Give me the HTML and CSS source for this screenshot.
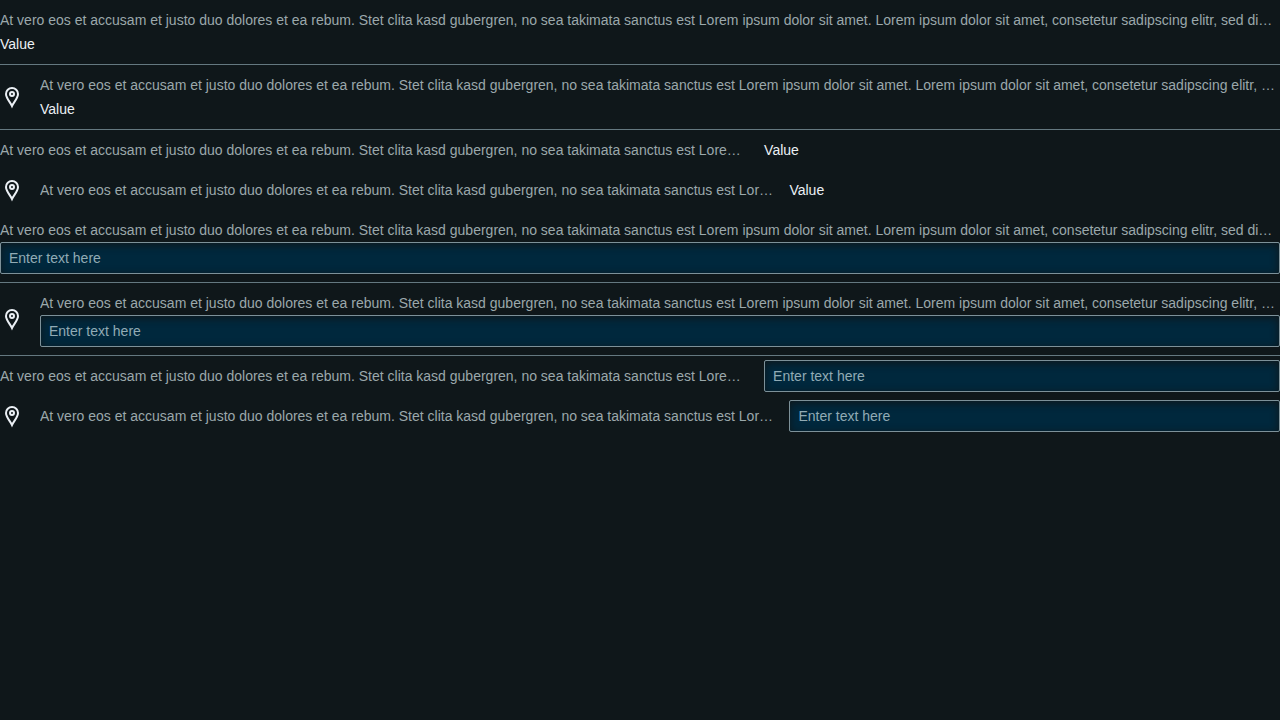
FILE: index.html
```
<!DOCTYPE html>
<html lang="en">
<head>
<meta charset="utf-8">
<title>Key value list</title>
<link rel="stylesheet" href="styles.css">
</head>
<body>
<svg class="symbols" aria-hidden="true">
  <symbol id="pin" viewBox="0 0 24 24">
    <path d="M12 21C10.500 17.600 6 13.200 6 9a6 6 0 0 1 12 0c0 4.200-4.500 8.600-6 12Z" fill="none" stroke="currentColor" stroke-width="2"/>
    <circle cx="12" cy="9" r="2" fill="none" stroke="currentColor" stroke-width="2"/>
  </symbol>
</svg>
<main class="list">
  <div class="row stacked">
    <div class="content">
      <div class="label">At vero eos et accusam et justo duo dolores et ea rebum. Stet clita kasd gubergren, no sea takimata sanctus est Lorem ipsum dolor sit amet. Lorem ipsum dolor sit amet, consetetur sadipscing elitr, sed diam nonumy eirmod tempor</div>
      <div class="value">Value</div>
    </div>
  </div>
  <div class="row stacked">
    <svg class="icon" aria-hidden="true"><use href="#pin"/></svg>
    <div class="content">
      <div class="label">At vero eos et accusam et justo duo dolores et ea rebum. Stet clita kasd gubergren, no sea takimata sanctus est Lorem ipsum dolor sit amet. Lorem ipsum dolor sit amet, consetetur sadipscing elitr, sed diam nonumy eirmod tempor</div>
      <div class="value">Value</div>
    </div>
  </div>
  <div class="row inline">
    <div class="content">
      <div class="label">At vero eos et accusam et justo duo dolores et ea rebum. Stet clita kasd gubergren, no sea takimata sanctus est Lorem ipsum dolor sit amet.</div>
      <div class="value">Value</div>
    </div>
  </div>
  <div class="row inline with-icon">
    <svg class="icon" aria-hidden="true"><use href="#pin"/></svg>
    <div class="content">
      <div class="label">At vero eos et accusam et justo duo dolores et ea rebum. Stet clita kasd gubergren, no sea takimata sanctus est Lorem ipsum dolor sit amet.</div>
      <div class="value">Value</div>
    </div>
  </div>
  <div class="row stacked">
    <div class="content">
      <label class="label" for="text-1">At vero eos et accusam et justo duo dolores et ea rebum. Stet clita kasd gubergren, no sea takimata sanctus est Lorem ipsum dolor sit amet. Lorem ipsum dolor sit amet, consetetur sadipscing elitr, sed diam nonumy eirmod tempor</label>
      <input class="field" id="text-1" type="text" placeholder="Enter text here">
    </div>
  </div>
  <div class="row stacked">
    <svg class="icon" aria-hidden="true"><use href="#pin"/></svg>
    <div class="content">
      <label class="label" for="text-2">At vero eos et accusam et justo duo dolores et ea rebum. Stet clita kasd gubergren, no sea takimata sanctus est Lorem ipsum dolor sit amet. Lorem ipsum dolor sit amet, consetetur sadipscing elitr, sed diam nonumy eirmod tempor</label>
      <input class="field" id="text-2" type="text" placeholder="Enter text here">
    </div>
  </div>
  <div class="row inline">
    <div class="content">
      <label class="label" for="text-3">At vero eos et accusam et justo duo dolores et ea rebum. Stet clita kasd gubergren, no sea takimata sanctus est Lorem ipsum dolor sit amet.</label>
      <input class="field" id="text-3" type="text" placeholder="Enter text here">
    </div>
  </div>
  <div class="row inline with-icon">
    <svg class="icon" aria-hidden="true"><use href="#pin"/></svg>
    <div class="content">
      <label class="label" for="text-4">At vero eos et accusam et justo duo dolores et ea rebum. Stet clita kasd gubergren, no sea takimata sanctus est Lorem ipsum dolor sit amet.</label>
      <input class="field" id="text-4" type="text" placeholder="Enter text here">
    </div>
  </div>
</main>
</body>
</html>
```

FILE: styles.css
```
* {
  box-sizing: border-box;
}

body {
  margin: 0;
  background: #0f171a;
  color: #ebf0f5;
  font: 14px/24px "Liberation Sans", Arial, sans-serif;
}

.symbols {
  display: none;
}

.row {
  display: flex;
  align-items: center;
  gap: 16px;
}

.stacked {
  padding: 8px 0;
  border-bottom: 1px solid #647880;
}

.inline {
  min-height: 40px;
}

.icon {
  flex: none;
  width: 24px;
  height: 24px;
}

.content {
  flex: 1;
  min-width: 0;
}

.inline .content {
  display: grid;
  grid-template-columns: 145fr 100fr;
  align-items: center;
  column-gap: 16px;
}

.with-icon .content {
  grid-template-columns: 299fr 200fr;
}

.label {
  display: block;
  min-width: 0;
  overflow: hidden;
  color: #9ba8ab;
  text-overflow: ellipsis;
  white-space: nowrap;
}

.field {
  display: block;
  width: 100%;
  min-width: 0;
  height: 32px;
  padding: 0 8px;
  border: 1px solid #7d9199;
  border-radius: 2px;
  background: #00283d;
  box-shadow: inset 0 2px 8px #0f171a;
  color: #ebf0f5;
  font: inherit;
}

.field::placeholder {
  color: #91abb5;
  opacity: 1;
}
```
